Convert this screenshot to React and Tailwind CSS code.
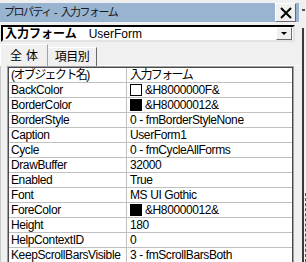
const rows = [
  { name: '(オブジェクト名)', value: '入力フォーム', jpName: true, jpValue: true },
  { name: 'BackColor', value: '&H8000000F&', swatch: 'bg-white' },
  { name: 'BorderColor', value: '&H80000012&', swatch: 'bg-black' },
  { name: 'BorderStyle', value: '0 - fmBorderStyleNone' },
  { name: 'Caption', value: 'UserForm1' },
  { name: 'Cycle', value: '0 - fmCycleAllForms' },
  { name: 'DrawBuffer', value: '32000' },
  { name: 'Enabled', value: 'True' },
  { name: 'Font', value: 'MS UI Gothic' },
  { name: 'ForeColor', value: '&H80000012&', swatch: 'bg-black' },
  { name: 'Height', value: '180' },
  { name: 'HelpContextID', value: '0' },
  { name: 'KeepScrollBarsVisible', value: '3 - fmScrollBarsBoth' },
];

const font = { fontFamily: "'Liberation Sans', 'Noto Sans CJK JP', sans-serif" };

const Row = ({ row }) => (
  <div className="flex h-[15px] border-b border-[#c0c0c0] bg-white text-[12px] leading-[14px] text-black">
    <div
      className={`w-[118px] shrink-0 border-r border-[#c0c0c0] pl-[2px] whitespace-nowrap overflow-hidden ${
        row.jpName ? 'tracking-[-1.6px]' : 'tracking-[-0.4px]'
      }`}
    >
      {row.name}
    </div>
    <div className="flex flex-1 items-center pl-[3px] whitespace-nowrap overflow-hidden">
      {row.swatch && (
        <span className={`mr-[3px] h-[12px] w-[12px] shrink-0 border border-black ${row.swatch}`} />
      )}
      <span className={row.jpValue ? 'tracking-[-1.6px]' : 'tracking-[-0.4px]'}>{row.value}</span>
    </div>
  </div>
);

export default function App() {
  return (
    <div className="flex h-[262px] w-[306px] overflow-hidden bg-[#f0f0f0]" style={font}>
      <div className="flex w-[299px] shrink-0 flex-col">
        {/* title bar */}
        <div className="mt-[3px] flex h-[22px] items-center justify-between bg-[#99b4d1] pl-[4px] pr-[3px]">
          <span className="whitespace-pre text-[11px] text-[#1a1a1a]">
            <span className="tracking-[-1.5px]">プロパティ</span>
            <span> - </span>
            <span className="tracking-[-1.5px]">入力フォーム</span>
          </span>
          <button className="flex h-[19px] w-[21px] items-center justify-center border border-t-white border-l-white border-r-[#696969] border-b-[#696969] bg-[#f0f0f0]">
            <svg width="12" height="12" viewBox="0 0 12 12">
              <path d="M1 1 L11 11 M11 1 L1 11" stroke="black" strokeWidth="2" />
            </svg>
          </button>
        </div>

        {/* object combo */}
        <div className="mt-[3px] ml-[1px] mr-[4px] flex h-[17px] items-center border-2 border-t-black border-l-black border-r-[#e3e3e3] border-b-[#e3e3e3] bg-white pr-[1px]">
          <span className="pl-[2px] text-[12px] font-bold">入力フォーム</span>
          <span className="ml-[12px] text-[12px]">UserForm</span>
          <div className="ml-auto flex h-[13px] w-[16px] items-center justify-center border border-t-white border-l-white border-r-[#696969] border-b-[#696969] bg-[#f0f0f0]">
            <svg width="6" height="3" viewBox="0 0 6 3">
              <path d="M0 0 H6 L3 3 Z" fill="black" />
            </svg>
          </div>
        </div>

        {/* tabs */}
        <div className="mt-[2px] flex h-[22px] items-end">
          <div className="relative z-10 flex h-[22px] w-[48px] items-center justify-center border-l border-t border-white border-r-[#a0a0a0] border-r bg-[#f0f0f0] pl-[4px] text-[12px] tracking-[4px]">
            全体
          </div>
          <div className="flex h-[19px] w-[49px] items-center justify-center border-t border-r border-t-white border-r-[#696969] text-[12px] tracking-[-0.5px]">
            項目別
          </div>
          <div className="flex-1 self-end border-b border-white" />
        </div>

        {/* page */}
        <div className="flex flex-1 flex-col border-l border-[#c8c8c8] pr-[5px] pl-[6px]">
          <div className="flex-1 border-l border-t border-r border-[#a0a0a0]">
            <div className="h-full border-l border-t border-r border-[#4a4a4a] bg-white">
              {rows.map((r) => (
                <Row key={r.name} row={r} />
              ))}
            </div>
          </div>
        </div>
      </div>

      {/* window behind */}
      <div className="flex flex-1 flex-col">
        <div className="mt-[9px] ml-[3px] h-[2px] w-[3px] bg-[#555]" />
        <div className="mt-[17px] ml-[3px] flex flex-1 border-l-2 border-[#3a3a3a]">
          <div className="mt-[165px] ml-[1px] flex-1 border-t border-l border-dashed border-[#555]" />
        </div>
      </div>
    </div>
  );
}
